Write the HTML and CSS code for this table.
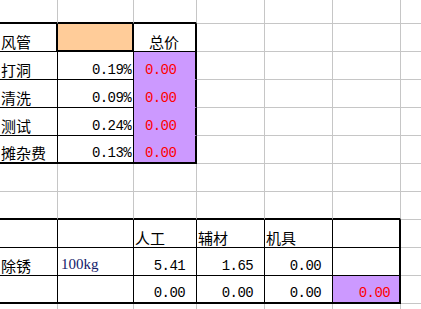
FILE: index.html
```html
<!DOCTYPE html>
<html>
<head>
<meta charset="utf-8">
<link rel="stylesheet" href="styles.css">
</head>
<body>
<div class="sheet">
  <!-- row 0 -->
  <div class="c tb"></div><div class="c tb"></div><div class="c tb"></div><div class="c"></div><div class="c"></div><div class="c"></div><div class="c"></div>
  <!-- row 1 -->
  <div class="c tr kb cjk">风管</div><div class="c orange tr tb"></div><div class="c tr kb cjk ctr">总价</div><div class="c"></div><div class="c"></div><div class="c"></div><div class="c"></div>
  <!-- row 2 -->
  <div class="c kr kb cjk">打洞</div><div class="c kr kb num r pct">0.19%</div><div class="c purple tr red num">0.00</div><div class="c"></div><div class="c"></div><div class="c"></div><div class="c"></div>
  <!-- row 3 -->
  <div class="c kr kb cjk">清洗</div><div class="c kr kb num r pct">0.09%</div><div class="c purple tr red num">0.00</div><div class="c"></div><div class="c"></div><div class="c"></div><div class="c"></div>
  <!-- row 4 -->
  <div class="c kr kb cjk">测试</div><div class="c kr kb num r pct">0.24%</div><div class="c purple tr red num">0.00</div><div class="c"></div><div class="c"></div><div class="c"></div><div class="c"></div>
  <!-- row 5 -->
  <div class="c kr tb cjk">摊杂费</div><div class="c kr tb num r pct">0.13%</div><div class="c purple tr tb red num">0.00</div><div class="c"></div><div class="c"></div><div class="c"></div><div class="c"></div>
  <!-- row 6 -->
  <div class="c"></div><div class="c"></div><div class="c"></div><div class="c"></div><div class="c"></div><div class="c"></div><div class="c"></div>
  <!-- row 7 -->
  <div class="c tb"></div><div class="c tb"></div><div class="c tb"></div><div class="c tb"></div><div class="c tb"></div><div class="c tb"></div><div class="c"></div>
  <!-- row 8 -->
  <div class="c kr kb"></div><div class="c kr kb"></div><div class="c kr kb cjk">人工</div><div class="c kr kb cjk">辅材</div><div class="c kr kb cjk">机具</div><div class="c tr kb"></div><div class="c"></div>
  <!-- row 9 -->
  <div class="c kr kb cjk">除锈</div><div class="c kr kb serif">100kg</div><div class="c kr kb num r">5.41</div><div class="c kr kb num r">1.65</div><div class="c kr kb num r">0.00</div><div class="c tr kb"></div><div class="c"></div>
  <!-- row 10 -->
  <div class="c kr tb"></div><div class="c kr tb"></div><div class="c kr tb num r">0.00</div><div class="c kr tb num r">0.00</div><div class="c kr tb num r">0.00</div><div class="c purple tr tb red num r tot">0.00</div><div class="c"></div>
  <!-- row 11 -->
  <div class="c"></div><div class="c"></div><div class="c"></div><div class="c"></div><div class="c"></div><div class="c"></div><div class="c"></div>
</div>
</body>
</html>
```

FILE: styles.css
```css
html, body {
  margin: 0;
  padding: 0;
  background: #ffffff;
  overflow: hidden;
}

.sheet {
  display: grid;
  grid-template-columns: 58px 76px 63px 68px 68px 68px 40px;
  grid-template-rows: 24px repeat(10, 28px) 6px;
  width: 441px;
}

.c {
  box-sizing: border-box;
  border-right: 1px solid #c6c6c6;
  border-bottom: 1px solid #c6c6c6;
  display: flex;
  align-items: flex-end;
  padding: 0 2px 1px 0;
  white-space: nowrap;
  overflow: hidden;
  color: #000;
}

/* thin black */
.kr { border-right-color: #000; }
.kb { border-bottom-color: #000; }

/* thick black */
.tr { border-right: 2px solid #000; }
.tb { border-bottom: 2px solid #000; }

.orange { background: #ffcc99; }
.purple { background: #cc99ff; border-bottom-color: #cc99ff; }
.purple.tb { border-bottom-color: #000; }

.cjk {
  font-family: "Noto Sans CJK SC", sans-serif;
  font-size: 15px;
  line-height: 17px;
  padding-left: 1px;
}

.ctr { justify-content: center; }

.num {
  font-family: "Liberation Mono", monospace;
  font-size: 14px;
  letter-spacing: -0.6px;
  line-height: 15px;
  padding-bottom: 1px;
}

.r {
  justify-content: flex-end;
  padding-right: 11px;
}

.pct { padding-right: 2px; }

.red {
  color: #ff0000;
  padding-left: 11px;
}

.tot { padding-right: 9px; }

.serif {
  font-family: "Liberation Serif", serif;
  font-size: 15px;
  line-height: 16px;
  color: #13206a;
  padding-left: 3px;
  padding-bottom: 3px;
}
```
